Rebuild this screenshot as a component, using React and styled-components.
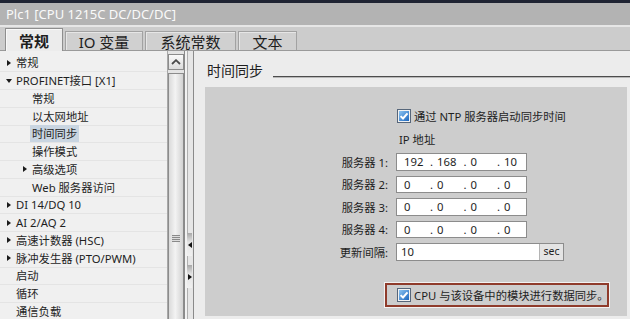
import React from 'react';
import styled, { createGlobalStyle } from 'styled-components';

const GlobalStyle = createGlobalStyle`
  html, body {
    margin: 0;
    padding: 0;
  }
  body {
    width: 630px;
    height: 319px;
    overflow: hidden;
    background: #ececec;
    font-family: "Noto Sans", "Noto Sans CJK SC", sans-serif;
    color: #1e1e1e;
  }
  * {
    box-sizing: border-box;
  }
`;

const tree = [
  { level: 0, arrow: 'right', text: '常规' },
  { level: 0, arrow: 'down', text: 'PROFINET接口 [X1]' },
  { level: 1, text: '常规' },
  { level: 1, text: '以太网地址' },
  { level: 1, text: '时间同步', selected: true },
  { level: 1, text: '操作模式' },
  { level: 1, arrow: 'right', text: '高级选项' },
  { level: 1, text: 'Web 服务器访问' },
  { level: 0, arrow: 'right', text: 'DI 14/DQ 10' },
  { level: 0, arrow: 'right', text: 'AI 2/AQ 2' },
  { level: 0, arrow: 'right', text: '高速计数器 (HSC)' },
  { level: 0, arrow: 'right', text: '脉冲发生器 (PTO/PWM)' },
  { level: 0, text: '启动' },
  { level: 0, text: '循环' },
  { level: 0, text: '通信负载' },
];

const servers = [
  ['192', '168', '0', '10'],
  ['0', '0', '0', '0'],
  ['0', '0', '0', '0'],
  ['0', '0', '0', '0'],
];

function CheckIcon() {
  return (
    <CheckBox>
      <svg width="14" height="14" viewBox="0 0 14 14">
        <defs>
          <linearGradient id="cbfill" x1="0" y1="0" x2="1" y2="1">
            <stop offset="0" stopColor="#8cc4f2" />
            <stop offset="1" stopColor="#1c66bd" />
          </linearGradient>
        </defs>
        <rect x="0.5" y="0.5" width="13" height="13" fill="#f2f2f2" stroke="#56667a" />
        <rect x="2" y="2" width="10" height="10" fill="url(#cbfill)" />
        <path d="M3.6 7.1 L6 9.5 L10.5 4.3" fill="none" stroke="#ffffff" strokeWidth="2" />
      </svg>
    </CheckBox>
  );
}

function App() {
  return (
    <Window>
      <GlobalStyle />
      <TopEdge />
      <TitleBar>Plc1 [CPU 1215C DC/DC/DC]</TitleBar>
      <TabStrip>
        <Tab $active $width={58}>常规</Tab>
        <Tab $width={78}>IO 变量</Tab>
        <Tab $width={91}>系统常数</Tab>
        <Tab $width={59}>文本</Tab>
      </TabStrip>
      <Body>
        <Tree>
          {tree.map((item, i) => (
            <TreeRow key={i} $level={item.level}>
              <Arrow $dir={item.arrow} />
              <RowLabel $selected={item.selected}>{item.text}</RowLabel>
            </TreeRow>
          ))}
        </Tree>
        <ScrollBar>
          <ScrollBtn>
            <svg width="10" height="6" viewBox="0 0 10 6">
              <path d="M1 5 L5 1.2 L9 5" fill="none" stroke="#4a4a4a" strokeWidth="1.8" />
            </svg>
          </ScrollBtn>
          <Thumb>
            <Grip />
          </Thumb>
        </ScrollBar>
        <Splitter>
          <SplitBtn $first>
            <SmallTri $dir="left" />
          </SplitBtn>
          <SplitBtn>
            <SmallTri $dir="right" />
          </SplitBtn>
        </Splitter>
        <Content>
          <HeadingRow>
            <Heading>时间同步</Heading>
            <HeadingLine />
          </HeadingRow>
          <Panel>
            <CheckRow>
              <CheckIcon />
              <span>通过 NTP 服务器启动同步时间</span>
            </CheckRow>
            <IpHeader>IP 地址</IpHeader>
            {servers.map((ip, i) => (
              <React.Fragment key={i}>
                <FieldLabel>服务器 {i + 1}:</FieldLabel>
                <IpField>
                  {ip.map((part, j) => (
                    <IpPart key={j} $first={j === 0}>
                      {j > 0 && <Dot>.</Dot>}
                      {part}
                    </IpPart>
                  ))}
                </IpField>
              </React.Fragment>
            ))}
            <FieldLabel>更新间隔:</FieldLabel>
            <IntervalField>
              <IntervalValue>10</IntervalValue>
              <Unit>sec</Unit>
            </IntervalField>
            <Highlight>
              <CheckIcon />
              <span>CPU 与该设备中的模块进行数据同步。</span>
            </Highlight>
          </Panel>
        </Content>
      </Body>
    </Window>
  );
}

const Window = styled.div`
  width: 630px;
  height: 319px;
  display: flex;
  flex-direction: column;
  overflow: hidden;
`;

const TopEdge = styled.div`
  height: 3px;
  flex-shrink: 0;
  background: #1f2433;
`;

const TitleBar = styled.div`
  height: 24px;
  flex-shrink: 0;
  background: #b3b3b3;
  border-bottom: 2px solid #e6e6e6;
  color: #fafafa;
  font-size: 13px;
  line-height: 22px;
  padding-left: 6px;
`;

const TabStrip = styled.div`
  height: 24px;
  flex-shrink: 0;
  display: flex;
  align-items: flex-end;
  gap: 2px;
  padding-left: 5px;
  background: #cccccc;
  border-bottom: 1px solid #9a9a9a;
`;

const Tab = styled.div`
  width: ${p => p.$width}px;
  height: ${p => (p.$active ? 23 : 19)}px;
  margin-bottom: ${p => (p.$active ? -1 : 0)}px;
  display: flex;
  align-items: center;
  justify-content: center;
  font-size: 15px;
  font-weight: ${p => (p.$active ? 700 : 400)};
  color: #1e1e1e;
  background: ${p => (p.$active ? '#ececec' : '#d0d0d0')};
  border: 1px solid ${p => (p.$active ? '#8e8e8e' : '#a2a2a2')};
  border-bottom: none;
  box-shadow: inset 1px 1px 0 ${p => (p.$active ? '#f8f8f8' : '#e6e6e6')};
  padding-top: ${p => (p.$active ? 0 : 1)}px;
`;

const Body = styled.div`
  flex: 1;
  min-height: 0;
  display: flex;
`;

const Tree = styled.div`
  width: 167px;
  flex-shrink: 0;
  background: #f0f0f0;
  padding-top: 3.5px;
  overflow: hidden;
`;

const TreeRow = styled.div`
  height: 17.75px;
  display: flex;
  align-items: center;
  padding-left: ${p => (p.$level === 0 ? 4 : 20)}px;
  border-bottom: 1px solid #e4e4e4;
  font-size: 11.3px;
  white-space: nowrap;
`;

const Arrow = styled.span`
  width: 12px;
  flex-shrink: 0;
  display: flex;
  align-items: center;
  padding-left: 2px;
  &::before {
    content: '';
    display: ${p => (p.$dir ? 'block' : 'none')};
    width: 0;
    height: 0;
    ${p =>
      p.$dir === 'down'
        ? 'border-top: 4px solid #1a1a1a; border-left: 3.5px solid transparent; border-right: 3.5px solid transparent;'
        : 'border-left: 4px solid #1a1a1a; border-top: 3.5px solid transparent; border-bottom: 3.5px solid transparent; margin-left: 1px;'}
  }
`;

const RowLabel = styled.span`
  line-height: 17px;
  padding: 0 2px;
  margin-left: -2px;
  background: ${p => (p.$selected ? '#c9d5e1' : 'transparent')};
`;

const ScrollBar = styled.div`
  width: 17px;
  flex-shrink: 0;
  display: flex;
  flex-direction: column;
  gap: 3px;
  padding-top: 2.5px;
  background: #e4e4e4;
  border-left: 1px solid #a8a8a8;
`;

const ScrollBtn = styled.div`
  height: 16px;
  display: flex;
  align-items: center;
  justify-content: center;
  border: 1px solid #8c8c8c;
  background: linear-gradient(#fafafa, #dcdcdc);
`;

const Thumb = styled.div`
  flex: 1;
  display: flex;
  justify-content: center;
  padding-top: 161px;
  border: 1px solid #8c8c8c;
  border-bottom: none;
  background: linear-gradient(to right, #dadada, #f3f3f3 45%, #d2d2d2);
`;

const Grip = styled.div`
  width: 8px;
  height: 7px;
  background: repeating-linear-gradient(#8a8a8a 0 1px, #dcdcdc 1px 2px);
`;

const Splitter = styled.div`
  width: 9px;
  flex-shrink: 0;
  display: flex;
  flex-direction: column;
  padding-top: 182px;
  background: #e6e6e6;
  border-left: 1px solid #8a8a8a;
  box-shadow: inset 2px 0 0 #f2f2f2, inset 3px 0 0 #b0b0b0;
`;

const SplitBtn = styled.div`
  height: 23px;
  width: 5px;
  margin-left: 2px;
  margin-top: ${p => (p.$first ? 0 : 9)}px;
  display: flex;
  align-items: center;
  justify-content: center;
  background: linear-gradient(#a8a8a8, #e4e4e4 40%, #f0f0f0);
`;

const SmallTri = styled.span`
  width: 0;
  height: 0;
  border-top: 3.5px solid transparent;
  border-bottom: 3.5px solid transparent;
  ${p =>
    p.$dir === 'left'
      ? 'border-right: 4px solid #111;'
      : 'border-left: 4px solid #111;'}
`;

const Content = styled.div`
  flex: 1;
  min-width: 0;
  display: flex;
  flex-direction: column;
  padding: 0 3px 3px 11px;
  border-left: 1px solid #8a8a8a;
  background: #ececec;
`;

const HeadingRow = styled.div`
  height: 36px;
  flex-shrink: 0;
  display: flex;
  align-items: flex-end;
  padding: 0 0 8px 2px;
`;

const Heading = styled.div`
  font-size: 14px;
  line-height: 16px;
  color: #1e1e1e;
`;

const HeadingLine = styled.div`
  flex: 1;
  height: 2px;
  margin-left: 10px;
  margin-bottom: 1px;
  border-top: 1px solid #4c4c4c;
  border-bottom: 1px solid #b8b8b8;
  margin-right: -3px;
`;

const Panel = styled.div`
  flex: 1;
  display: grid;
  grid-template-columns: 183px auto;
  column-gap: 8px;
  row-gap: 5px;
  align-content: start;
  padding-top: 22px;
  background: #cdcdcd;
  font-size: 11.3px;
`;

const CheckBox = styled.span`
  width: 14px;
  height: 14px;
  flex-shrink: 0;
  display: flex;
`;

const CheckRow = styled.div`
  grid-column: 2;
  height: 14px;
  display: flex;
  align-items: center;
  gap: 3px;
  margin-left: 1px;
  white-space: nowrap;
`;

const IpHeader = styled.div`
  grid-column: 2;
  height: 16px;
  line-height: 16px;
  padding-left: 3px;
  margin-top: 4px;
`;

const FieldLabel = styled.div`
  grid-column: 1;
  align-self: center;
  text-align: right;
  white-space: nowrap;
`;

const IpField = styled.div`
  width: 131px;
  height: 17.5px;
  display: flex;
  align-items: center;
  padding-left: 7px;
  background: #ffffff;
  border: 1px solid #8c8c8c;
`;

const IpPart = styled.span`
  width: ${p => (p.$first ? 26 : 33.5)}px;
  flex-shrink: 0;
  display: flex;
  line-height: 15px;
`;

const Dot = styled.span`
  width: 7px;
`;

const IntervalField = styled.div`
  width: 168px;
  height: 17.5px;
  display: flex;
  background: #ffffff;
  border: 1px solid #8c8c8c;
`;

const IntervalValue = styled.span`
  flex: 1;
  padding-left: 4px;
  line-height: 15.5px;
`;

const Unit = styled.span`
  width: 24px;
  border-left: 1px solid #b4b4b4;
  background: #e4e4e4;
  font-size: 10.5px;
  line-height: 15.5px;
  text-align: center;
`;

const Highlight = styled.div`
  grid-column: 1 / -1;
  justify-self: start;
  width: 224px;
  margin-left: 180px;
  margin-top: 17px;
  height: 24px;
  display: flex;
  align-items: center;
  gap: 3px;
  padding: 0 0 0 10px;
  border: 2px solid #8f3b2b;
  box-shadow: 0 0 0 1px #f2f2f2;
  white-space: nowrap;
  overflow: hidden;
`;

export default App;
